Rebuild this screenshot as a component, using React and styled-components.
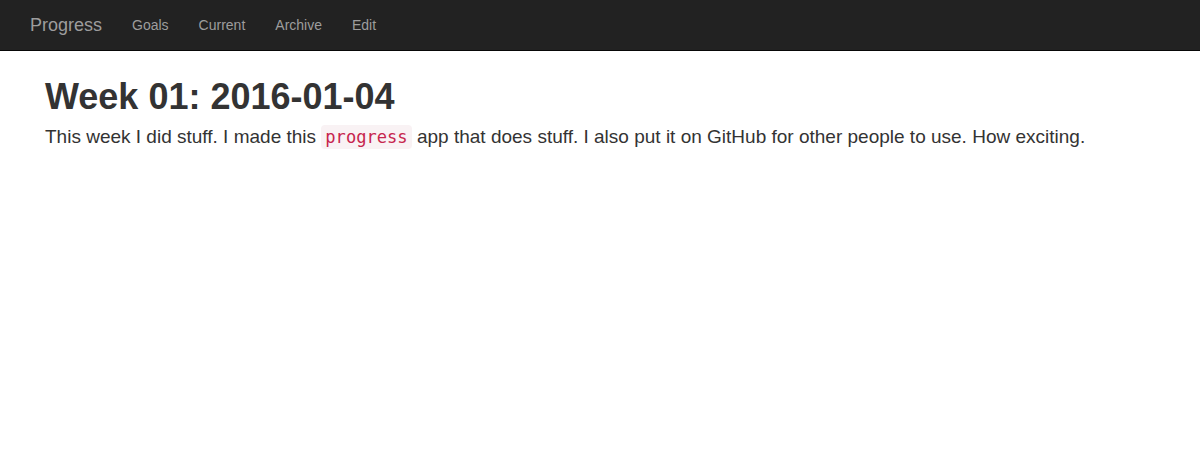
import styled, { createGlobalStyle } from 'styled-components'

const GlobalStyle = createGlobalStyle`
  html, body {
    margin: 0;
    padding: 0;
    background: #fff;
  }
  body {
    font-family: "Liberation Sans", Arial, sans-serif;
    font-size: 16px;
    line-height: 1.42857143;
    color: #333;
  }
`

const Navbar = styled.nav`
  background: #222;
  border-bottom: 1px solid #080808;
  height: 50px;
  display: flex;
  align-items: center;
  padding: 0 15px;
`

const Brand = styled.a`
  font-size: 18px;
  line-height: 20px;
  padding: 15px;
  color: #9d9d9d;
  text-decoration: none;
`

const NavList = styled.ul`
  display: flex;
  list-style: none;
  margin: 0;
  padding: 0;
`

const NavLink = styled.a`
  display: block;
  font-size: 14px;
  line-height: 20px;
  padding: 15px;
  color: #9d9d9d;
  text-decoration: none;
`

const Container = styled.main`
  padding: 0 45px;
`

const Heading = styled.h1`
  font-size: 36px;
  font-weight: 700;
  line-height: 1.1;
  margin: 26px 0 6px;
`

const Paragraph = styled.p`
  margin: 0;
  font-size: 19px;
  line-height: 27px;
`

const Code = styled.code`
  font-family: "DejaVu Sans Mono", Menlo, monospace;
  font-size: 90%;
  color: #c7254e;
  background: #f9f2f4;
  border-radius: 4px;
  padding: 2px 4px;
`

const links = ['Goals', 'Current', 'Archive', 'Edit']

export default function App() {
  return (
    <>
      <GlobalStyle />
      <Navbar>
        <Brand href="#">Progress</Brand>
        <NavList>
          {links.map(link => (
            <li key={link}>
              <NavLink href="#">{link}</NavLink>
            </li>
          ))}
        </NavList>
      </Navbar>
      <Container>
        <Heading>Week 01: 2016-01-04</Heading>
        <Paragraph>
          This week I did stuff. I made this <Code>progress</Code> app that does stuff. I also put it on GitHub for other people to use. How exciting.
        </Paragraph>
      </Container>
    </>
  )
}
